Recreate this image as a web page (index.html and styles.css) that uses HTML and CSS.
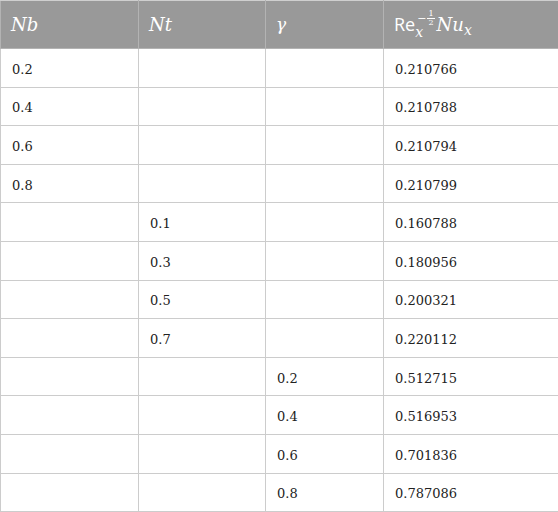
FILE: index.html
```html
<!DOCTYPE html>
<html>
<head>
<meta charset="utf-8">
<link rel="stylesheet" href="styles.css">
</head>
<body>
<table class="data">
  <colgroup>
    <col class="c1"><col class="c2"><col class="c3"><col class="c4">
  </colgroup>
  <thead>
    <tr class="head">
      <th><span class="mi">Nb</span></th>
      <th><span class="mi">Nt</span></th>
      <th><span class="mi gamma">γ</span></th>
      <th><span class="re">Re</span><span class="subsup"><span class="sup"><span class="minus">−</span><span class="frac"><span class="num">1</span><span class="den">2</span></span></span><span class="sub mi">x</span></span><span class="mi nu">Nu</span><span class="sub2 mi">x</span></th>
    </tr>
  </thead>
  <tbody>
    <tr><td>0.2</td><td></td><td></td><td>0.210766</td></tr>
    <tr><td>0.4</td><td></td><td></td><td>0.210788</td></tr>
    <tr><td>0.6</td><td></td><td></td><td>0.210794</td></tr>
    <tr><td>0.8</td><td></td><td></td><td>0.210799</td></tr>
    <tr><td></td><td>0.1</td><td></td><td>0.160788</td></tr>
    <tr><td></td><td>0.3</td><td></td><td>0.180956</td></tr>
    <tr><td></td><td>0.5</td><td></td><td>0.200321</td></tr>
    <tr><td></td><td>0.7</td><td></td><td>0.220112</td></tr>
    <tr><td></td><td></td><td>0.2</td><td>0.512715</td></tr>
    <tr><td></td><td></td><td>0.4</td><td>0.516953</td></tr>
    <tr><td></td><td></td><td>0.6</td><td>0.701836</td></tr>
    <tr><td></td><td></td><td>0.8</td><td>0.787086</td></tr>
  </tbody>
</table>
</body>
</html>
```
FILE: styles.css
```css
html, body {
  margin: 0;
  padding: 0;
  background: #ffffff;
}
.data {
  border-collapse: collapse;
  width: 558px;
  table-layout: fixed;
  font-family: "DejaVu Serif", serif;
  font-size: 13px;
  color: #222;
}
.c1 { width: 138px; }
.c2 { width: 127px; }
.c3 { width: 118px; }
.c4 { width: 175px; }
.data tr { height: 38.6px; }
.data tr.head { height: 48px; }
.data th {
  background: #999999;
  color: #ffffff;
  font-weight: normal;
  text-align: left;
  padding: 0 10px;
  border: 1px solid #b3b3b3;
  border-top-color: #cfcfcf;
  vertical-align: middle;
  line-height: 1;
}
.data td {
  padding: 3px 10px 0 11px;
  border: 1px solid #cccccc;
  vertical-align: middle;
  line-height: 1;
}
.mi {
  font-family: "DejaVu Serif", serif;
  font-style: italic;
  font-size: 18px;
}
.gamma { font-size: 17px; }
.re {
  font-family: "Open Sans", sans-serif;
  font-size: 18px;
}
.subsup {
  display: inline-flex;
  flex-direction: column;
  vertical-align: 9px;
  line-height: 1;
  margin-right: 2px;
}
.sup {
  display: inline-flex;
  align-items: center;
  font-family: "DejaVu Serif", serif;
  font-size: 11px;
  margin-left: 2px;
}
.minus { margin-right: 1px; }
.frac {
  display: inline-flex;
  flex-direction: column;
  align-items: center;
  font-size: 8px;
  line-height: 0.95;
}
.num { border-bottom: 1px solid #fff; padding: 0 1px; }
.sub {
  font-size: 14px;
  line-height: 1;
  margin-top: -2px;
}
.nu { font-size: 18px; }
.sub2 {
  font-size: 14px;
  vertical-align: -4px;
}
```
